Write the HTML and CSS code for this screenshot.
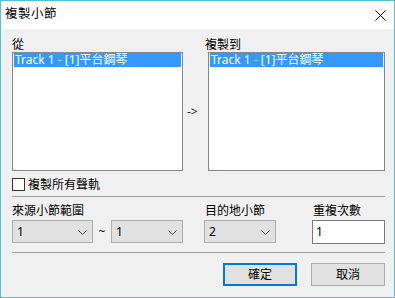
FILE: index.html
```html
<!DOCTYPE html>
<html lang="zh-Hant">
<head>
    <meta charset="UTF-8">
    <meta name="viewport" content="width=device-width, initial-scale=1.0">
    <title>複製小節</title>
    <link rel="stylesheet" href="styles.css">
</head>
<body>
    <div class="window">
        <div class="titlebar">
            <span class="title">複製小節</span>
            <svg class="close" width="11" height="11" viewBox="0 0 11 11">
                <path d="M0.5 0.5 L10.5 10.5 M10.5 0.5 L0.5 10.5" stroke="#000" stroke-width="1" fill="none"/>
            </svg>
        </div>

        <div class="content">
            <div class="lists">
                <div class="col col-from">
                    <div class="label">從</div>
                    <div class="listbox">
                        <div class="item selected">Track 1 - [1]平台鋼琴</div>
                    </div>
                </div>
                <div class="arrow">-&gt;</div>
                <div class="col col-to">
                    <div class="label">複製到</div>
                    <div class="listbox">
                        <div class="item selected">Track 1 - [1]平台鋼琴</div>
                    </div>
                </div>
            </div>

            <label class="check">
                <span class="box"></span>
                <span>複製所有聲軌</span>
            </label>

            <div class="sep"></div>

            <div class="ranges">
                <div class="field field-src">
                    <div class="label">來源小節範圍</div>
                    <div class="row">
                        <div class="combo combo-wide">
                            <span>1</span>
                            <svg class="chevron" width="9" height="5" viewBox="0 0 9 5"><path d="M0.5 0.5 L4.5 4.5 L8.5 0.5" stroke="#444" fill="none"/></svg>
                        </div>
                        <span class="tilde">~</span>
                        <div class="combo">
                            <span>1</span>
                            <svg class="chevron" width="9" height="5" viewBox="0 0 9 5"><path d="M0.5 0.5 L4.5 4.5 L8.5 0.5" stroke="#444" fill="none"/></svg>
                        </div>
                    </div>
                </div>
                <div class="field field-dest">
                    <div class="label">目的地小節</div>
                    <div class="combo">
                        <span>2</span>
                        <svg class="chevron" width="9" height="5" viewBox="0 0 9 5"><path d="M0.5 0.5 L4.5 4.5 L8.5 0.5" stroke="#444" fill="none"/></svg>
                    </div>
                </div>
                <div class="field field-repeat">
                    <div class="label">重複次數</div>
                    <div class="textbox">1</div>
                </div>
            </div>

            <div class="sep"></div>

            <div class="buttons">
                <button type="button" class="btn btn-default">確定</button>
                <button type="button" class="btn">取消</button>
            </div>
        </div>
    </div>
</body>
</html>
```

FILE: styles.css
```css
body {
    margin: 0;
    padding: 0;
    font-family: "Noto Sans", "Noto Sans CJK TC", sans-serif;
    font-size: 12px;
    color: #000;
    background-color: #f0f0f0;
}
.window {
    width: 395px;
    height: 298px;
    box-sizing: border-box;
    border: 1px solid #55bfd4;
    background-color: #f0f0f0;
    overflow: hidden;
}
.titlebar {
    height: 28px;
    background-color: #fff;
    display: flex;
    align-items: center;
    justify-content: space-between;
    padding: 0 8px 2px 4px;
    box-sizing: border-box;
}
.title {
    font-size: 12.5px;
    letter-spacing: 0.5px;
    line-height: 14px;
}
.close {
    display: block;
    margin-top: 2px;
}
.content {
    padding: 9px 9px 0 11px;
}
.label {
    line-height: 14px;
    height: 14px;
    white-space: nowrap;
}
.lists {
    display: flex;
}
.col-from {
    width: 171px;
}
.col-to {
    width: 177px;
}
.col-to .label {
    margin-left: -3px;
}
.listbox {
    height: 119px;
    box-sizing: border-box;
    border: 1px solid #828790;
    background: #fff;
    padding: 0 1px;
}
.item {
    height: 14px;
    line-height: 14px;
    padding-left: 1px;
    white-space: nowrap;
}
.item.selected {
    background-color: #3399ff;
    color: #fff;
}
.arrow {
    width: 25px;
    padding-left: 4px;
    box-sizing: border-box;
    align-self: center;
    margin-top: 14px;
    font-size: 12px;
    line-height: 14px;
    color: #1a1a33;
}
.check {
    display: flex;
    align-items: center;
    gap: 3px;
    margin-top: 7px;
    height: 13px;
    line-height: 14px;
}
.box {
    width: 13px;
    height: 13px;
    box-sizing: border-box;
    border: 1px solid #333;
    background: #fff;
}
.sep {
    height: 1px;
    background-color: #a0a0a0;
    margin-top: 5px;
}
.ranges {
    display: flex;
    margin-top: 7px;
}
.field-src {
    width: 171px;
}
.field-dest {
    width: 72px;
    margin-left: 21px;
}
.field-dest .label {
    margin-left: 1px;
}
.field-repeat {
    width: 73px;
    margin-left: 36px;
}
.field-repeat .label {
    margin-left: 1px;
}
.row {
    display: flex;
    align-items: center;
}
.combo {
    margin-top: 2px;
    height: 23px;
    width: 72px;
    box-sizing: border-box;
    border: 1px solid #adadad;
    background-color: #e1e1e1;
    display: flex;
    align-items: center;
    justify-content: space-between;
    padding: 0 5px 0 4px;
    line-height: 14px;
}
.combo-wide {
    width: 81px;
}
.chevron {
    display: block;
    margin-top: 1px;
}
.tilde {
    width: 18px;
    text-align: center;
    margin-top: 1px;
    font-size: 12px;
}
.textbox {
    margin-top: 2px;
    height: 24px;
    box-sizing: border-box;
    border: 1px solid #7a7a7a;
    background: #fff;
    padding-left: 3px;
    line-height: 22px;
}
.sep + .buttons {
    margin-top: 10px;
}
.ranges + .sep {
    margin-top: 8px;
}
.buttons {
    display: flex;
    justify-content: flex-end;
    gap: 14px;
    padding-right: 0;
}
.btn {
    width: 74px;
    height: 23px;
    box-sizing: border-box;
    border: 1px solid #adadad;
    background-color: #e1e1e1;
    font-family: "Noto Sans", "Noto Sans CJK TC", sans-serif;
    font-size: 12px;
    line-height: 14px;
    padding: 0;
    color: #000;
}
.btn-default {
    border: 2px solid #0078d7;
}
```
